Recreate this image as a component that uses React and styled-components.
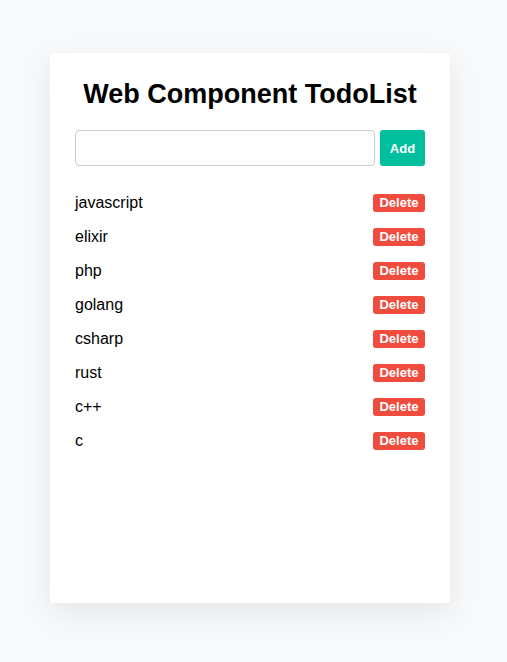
import React, { useState } from "react";
import styled, { createGlobalStyle } from "styled-components";

const Global = createGlobalStyle`
  html, body { margin: 0; padding: 0; background: #f8f9fa; }
  body { font-family: "Liberation Sans", Arial, sans-serif; }
`;

const Page = styled.div`
  display: flex;
  justify-content: flex-start;
  padding: 53px 0 0 50px;
  min-height: 662px;
  box-sizing: border-box;
`;

const Card = styled.div`
  width: 400px;
  height: 550px;
  box-sizing: border-box;
  background: #fff;
  border-radius: 3px;
  box-shadow: 0 10px 30px rgba(0, 0, 0, 0.08);
  padding: 25px;
  display: flex;
  flex-direction: column;
`;

const Title = styled.h1`
  margin: 0;
  font-size: 27px;
  line-height: 32px;
  font-weight: 700;
  text-align: center;
  color: #000;
`;

const Form = styled.div`
  display: flex;
  gap: 5px;
  margin-top: 20px;
`;

const Input = styled.input`
  flex: 1;
  height: 36px;
  box-sizing: border-box;
  border: 1px solid #ccc;
  border-radius: 4px;
  padding: 0 8px;
  font: inherit;
  outline: none;
`;

const AddButton = styled.button`
  width: 45px;
  height: 36px;
  border: none;
  border-radius: 3px;
  background: #00bf9f;
  color: #fff;
  font-family: inherit;
  font-weight: 700;
  font-size: 13px;
  padding: 0;
`;

const List = styled.ul`
  list-style: none;
  margin: 20px 0 0;
  padding: 0;
`;

const Row = styled.li`
  display: flex;
  align-items: center;
  justify-content: space-between;
  height: 34px;
  font-size: 16px;
  color: #000;
`;

const DeleteButton = styled.button`
  width: 52px;
  height: 18px;
  border: none;
  border-radius: 3px;
  background: #f04c3e;
  color: #fff;
  font-family: inherit;
  font-weight: 700;
  font-size: 13px;
  line-height: 18px;
  padding: 0;
`;

export default function App() {
  const [items, setItems] = useState([
    "javascript",
    "elixir",
    "php",
    "golang",
    "csharp",
    "rust",
    "c++",
    "c",
  ]);
  const [value, setValue] = useState("");
  return (
    <Page>
      <Global />
      <Card>
        <Title>Web Component TodoList</Title>
        <Form>
          <Input value={value} onChange={(e) => setValue(e.target.value)} />
          <AddButton
            onClick={() => {
              if (value.trim()) {
                setItems([...items, value.trim()]);
                setValue("");
              }
            }}
          >
            Add
          </AddButton>
        </Form>
        <List>
          {items.map((it, i) => (
            <Row key={i}>
              <span>{it}</span>
              <DeleteButton onClick={() => setItems(items.filter((_, j) => j !== i))}>
                Delete
              </DeleteButton>
            </Row>
          ))}
        </List>
      </Card>
    </Page>
  );
}
